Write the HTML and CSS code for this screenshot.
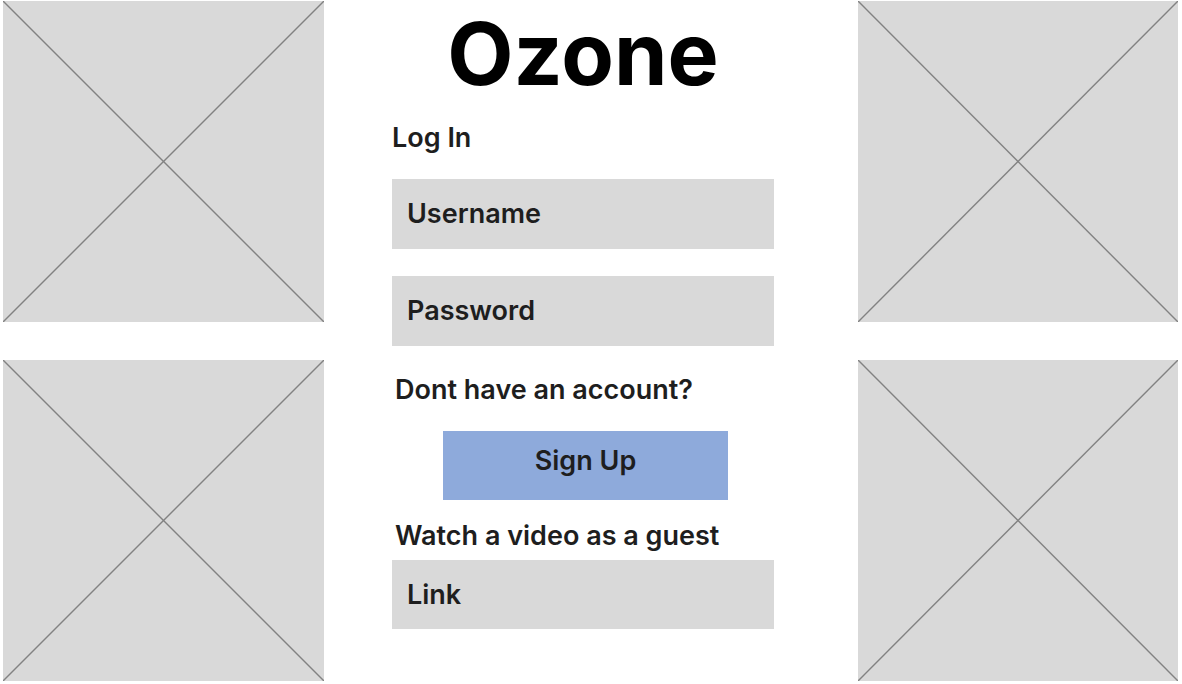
FILE: index.html
```html
<!DOCTYPE html>
<html>
  <head>
    <title>Ozone - Log In</title>
    <link rel="stylesheet" href="styles.css">
  </head>
  <body>
    <div class="page">
      <div class="side side-left">
        <div class="placeholder">
          <svg viewBox="0 0 100 100" preserveAspectRatio="none"><line x1="0" y1="0" x2="100" y2="100"/><line x1="100" y1="0" x2="0" y2="100"/></svg>
        </div>
        <div class="placeholder">
          <svg viewBox="0 0 100 100" preserveAspectRatio="none"><line x1="0" y1="0" x2="100" y2="100"/><line x1="100" y1="0" x2="0" y2="100"/></svg>
        </div>
      </div>

      <div class="login">
        <h1 class="title">Ozone</h1>
        <h3 class="label label-login">Log In</h3>
        <div class="field field-username">Username</div>
        <div class="field field-password">Password</div>
        <p class="label label-account">Dont have an account?</p>
        <div class="signup">Sign Up</div>
        <p class="label label-guest">Watch a video as a guest</p>
        <div class="field field-link">Link</div>
      </div>

      <div class="side side-right">
        <div class="placeholder">
          <svg viewBox="0 0 100 100" preserveAspectRatio="none"><line x1="0" y1="0" x2="100" y2="100"/><line x1="100" y1="0" x2="0" y2="100"/></svg>
        </div>
        <div class="placeholder">
          <svg viewBox="0 0 100 100" preserveAspectRatio="none"><line x1="0" y1="0" x2="100" y2="100"/><line x1="100" y1="0" x2="0" y2="100"/></svg>
        </div>
      </div>
    </div>
  </body>
</html>
```

FILE: styles.css
```css
body {
  background: #FFF;
  color: #1E1E1E;
  font-family: Inter, "Noto Sans", sans-serif;
  margin: 0px;
}

.page {
  display: flex;
  padding: 1px 4px 0 3px;
}

.side {
  display: flex;
  flex-direction: column;
  gap: 38px;
}

.side-right {
  margin-left: 84px;
}

.placeholder {
  background: #D9D9D9;
  width: 321px;
  height: 321px;
}

.side-right .placeholder {
  width: 320px;
}

.placeholder svg {
  display: block;
  width: 100%;
  height: 100%;
}

.placeholder line {
  stroke: #828282;
  stroke-width: 1.4;
  vector-effect: non-scaling-stroke;
}

.login {
  display: flex;
  flex-direction: column;
  margin-left: 68px;
  width: 383px;
}

.title {
  color: #000;
  font-size: 86px;
  font-weight: 700;
  line-height: 104px;
  margin: 1px 0 0 0;
  text-align: center;
}

.label {
  font-size: 27px;
  font-weight: 600;
  line-height: 33px;
  margin: 0;
}

.label-login {
  margin-top: 15px;
}

.label-account {
  margin-top: 27px;
  padding-left: 3px;
}

.label-guest {
  margin-top: 19px;
  padding-left: 3px;
}

.field {
  background: #D9D9D9;
  font-size: 27px;
  font-weight: 600;
  height: 70px;
  line-height: 70px;
  padding-left: 15px;
}

.field-username {
  margin-top: 25px;
}

.field-password {
  margin-top: 27px;
}

.field-link {
  height: 69px;
  line-height: 69px;
  margin-top: 8px;
}

.signup {
  align-self: flex-start;
  background: #8EAADB;
  font-size: 27px;
  font-weight: 600;
  height: 69px;
  line-height: 60px;
  margin-left: 51px;
  margin-top: 25px;
  text-align: center;
  width: 285px;
}
```
